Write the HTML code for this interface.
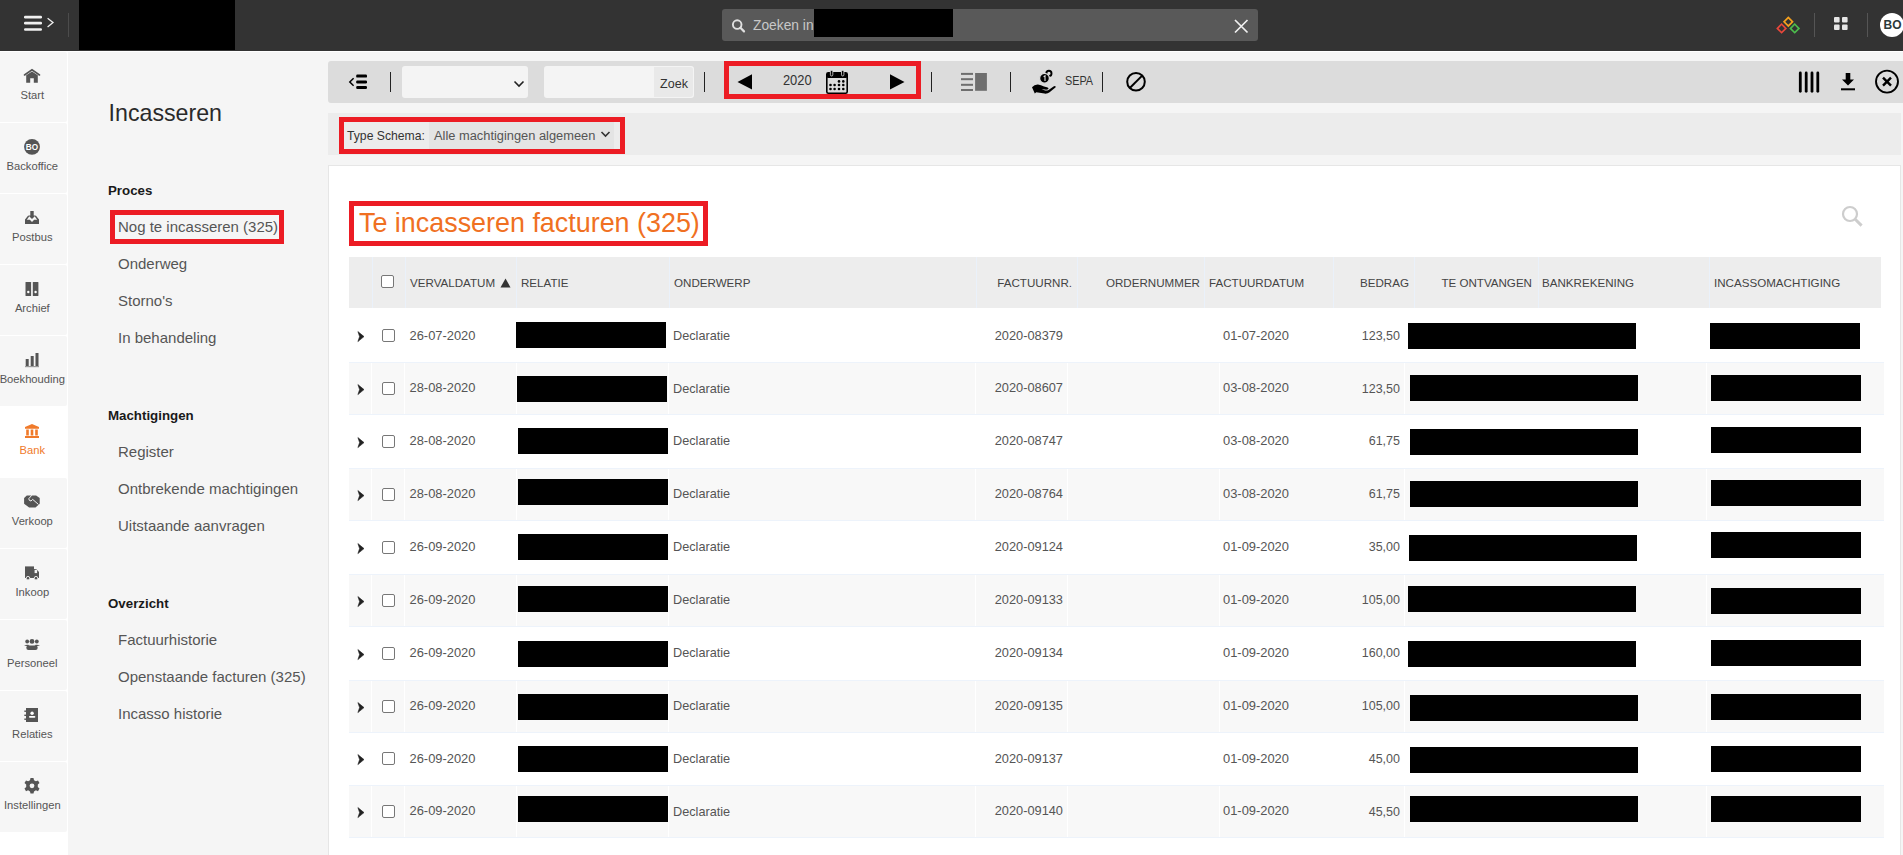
<!DOCTYPE html>
<html><head><meta charset="utf-8"><style>
html,body{margin:0;padding:0;width:1903px;height:855px;overflow:hidden;font-family:"Liberation Sans", sans-serif;}
body{position:relative;background:#f5f5f5}
</style></head><body>
<div style="position:absolute;left:0px;top:0px;width:1903px;height:51px;background:#333333"></div>
<div style="position:absolute;left:0px;top:51px;width:1903px;height:1px;background:#ffffff"></div>
<svg style="position:absolute;left:0px;top:0px;overflow:visible" width="70" height="50" viewBox="0 0 70 50"><g fill="#f0f0f0"><rect x="24" y="15.8" width="18" height="2.6" rx="1.2"/><rect x="24" y="21.8" width="18" height="2.6" rx="1.2"/><rect x="24" y="28.2" width="18" height="2.6" rx="1.2"/></g><path d="M47.6 18.2 L53 22.6 L47.6 27" stroke="#f0f0f0" stroke-width="1.3" fill="none"/></svg>
<div style="position:absolute;left:68px;top:13px;width:1px;height:24px;background:#4c4c4c"></div>
<div style="position:absolute;left:79px;top:0px;width:156px;height:50px;background:#000"></div>
<div style="position:absolute;left:722px;top:9px;width:536px;height:32px;background:#595959;border-radius:3px"></div>
<svg style="position:absolute;left:730px;top:17px;overflow:visible" width="18" height="18" viewBox="0 0 18 18"><circle cx="7.2" cy="7.6" r="4.3" stroke="#e0e0e0" stroke-width="1.9" fill="none"/><path d="M10.4 10.8 L14 14.4" stroke="#e0e0e0" stroke-width="2.2" stroke-linecap="round"/></svg>
<div style="position:absolute;left:753px;top:16.72px;font-size:13.8px;line-height:17px;color:#c8c8c8;font-weight:normal;white-space:nowrap;">Zoeken in</div>
<div style="position:absolute;left:814px;top:9px;width:139px;height:28px;background:#000"></div>
<svg style="position:absolute;left:1233px;top:18px;overflow:visible" width="16" height="16" viewBox="0 0 16 16"><path d="M2 2 L14.5 14.5 M14.5 2 L2 14.5" stroke="#f0f0f0" stroke-width="1.7"/></svg>
<svg style="position:absolute;left:1774px;top:15px;overflow:visible" width="30" height="20" viewBox="0 0 30 20"><g fill="none" stroke-width="1.7"><rect x="-3" y="-3" width="6" height="6" transform="translate(14.3 6.8) rotate(45)" stroke="#f5a01e"/><rect x="-3" y="-3" width="6" height="6" transform="translate(7.6 13.4) rotate(45)" stroke="#e8473b"/><rect x="-3" y="-3" width="6" height="6" transform="translate(20.7 13.4) rotate(45)" stroke="#4cbb4c"/></g></svg>
<div style="position:absolute;left:1814px;top:13px;width:1px;height:24px;background:#555"></div>
<svg style="position:absolute;left:1834px;top:17px;overflow:visible" width="15" height="14" viewBox="0 0 15 14"><g fill="#e6e6e6"><rect x="0" y="0" width="5.6" height="5.4" rx="1"/><rect x="8" y="0" width="5.6" height="5.4" rx="1"/><rect x="0" y="7.6" width="5.6" height="5.4" rx="1"/><rect x="8" y="7.6" width="5.6" height="5.4" rx="1"/></g></svg>
<div style="position:absolute;left:1867px;top:13px;width:1px;height:24px;background:#555"></div>
<div style="position:absolute;left:1880px;top:13px;width:24px;height:24px;background:#fff;border-radius:50%"></div>
<div style="position:absolute;left:1592.5px;width:600px;text-align:center;top:17.84px;font-size:12px;line-height:15px;color:#2b3a3a;font-weight:bold;white-space:nowrap;">BO</div>
<div style="position:absolute;left:0px;top:52px;width:68px;height:803px;background:#ffffff"></div>
<div style="position:absolute;left:0px;top:52px;width:67px;height:70px;background:#f6f6f6;border-radius:0 2px 2px 0"></div>
<div style="position:absolute;left:-267.7px;width:600px;text-align:center;top:87.92px;font-size:11.2px;line-height:14px;color:#555;font-weight:normal;white-space:nowrap;">Start</div>
<div style="position:absolute;left:0px;top:123px;width:67px;height:70px;background:#f6f6f6;border-radius:0 2px 2px 0"></div>
<div style="position:absolute;left:-267.7px;width:600px;text-align:center;top:158.92px;font-size:11.2px;line-height:14px;color:#555;font-weight:normal;white-space:nowrap;">Backoffice</div>
<div style="position:absolute;left:0px;top:194px;width:67px;height:70px;background:#f6f6f6;border-radius:0 2px 2px 0"></div>
<div style="position:absolute;left:-267.7px;width:600px;text-align:center;top:229.92px;font-size:11.2px;line-height:14px;color:#555;font-weight:normal;white-space:nowrap;">Postbus</div>
<div style="position:absolute;left:0px;top:265px;width:67px;height:70px;background:#f6f6f6;border-radius:0 2px 2px 0"></div>
<div style="position:absolute;left:-267.7px;width:600px;text-align:center;top:300.92px;font-size:11.2px;line-height:14px;color:#555;font-weight:normal;white-space:nowrap;">Archief</div>
<div style="position:absolute;left:0px;top:336px;width:67px;height:70px;background:#f6f6f6;border-radius:0 2px 2px 0"></div>
<div style="position:absolute;left:-267.7px;width:600px;text-align:center;top:371.92px;font-size:11.2px;line-height:14px;color:#555;font-weight:normal;white-space:nowrap;">Boekhouding</div>
<div style="position:absolute;left:0px;top:407px;width:67px;height:70px;background:#ffffff;border-radius:0 2px 2px 0"></div>
<div style="position:absolute;left:-267.7px;width:600px;text-align:center;top:442.92px;font-size:11.2px;line-height:14px;color:#f07a2a;font-weight:normal;white-space:nowrap;">Bank</div>
<div style="position:absolute;left:0px;top:478px;width:67px;height:70px;background:#f6f6f6;border-radius:0 2px 2px 0"></div>
<div style="position:absolute;left:-267.7px;width:600px;text-align:center;top:513.92px;font-size:11.2px;line-height:14px;color:#555;font-weight:normal;white-space:nowrap;">Verkoop</div>
<div style="position:absolute;left:0px;top:549px;width:67px;height:70px;background:#f6f6f6;border-radius:0 2px 2px 0"></div>
<div style="position:absolute;left:-267.7px;width:600px;text-align:center;top:584.92px;font-size:11.2px;line-height:14px;color:#555;font-weight:normal;white-space:nowrap;">Inkoop</div>
<div style="position:absolute;left:0px;top:620px;width:67px;height:70px;background:#f6f6f6;border-radius:0 2px 2px 0"></div>
<div style="position:absolute;left:-267.7px;width:600px;text-align:center;top:655.92px;font-size:11.2px;line-height:14px;color:#555;font-weight:normal;white-space:nowrap;">Personeel</div>
<div style="position:absolute;left:0px;top:691px;width:67px;height:70px;background:#f6f6f6;border-radius:0 2px 2px 0"></div>
<div style="position:absolute;left:-267.7px;width:600px;text-align:center;top:726.92px;font-size:11.2px;line-height:14px;color:#555;font-weight:normal;white-space:nowrap;">Relaties</div>
<div style="position:absolute;left:0px;top:762px;width:67px;height:70px;background:#f6f6f6;border-radius:0 2px 2px 0"></div>
<div style="position:absolute;left:-267.7px;width:600px;text-align:center;top:797.92px;font-size:11.2px;line-height:14px;color:#555;font-weight:normal;white-space:nowrap;">Instellingen</div>
<svg style="position:absolute;left:0px;top:0px;overflow:visible" width="68" height="855" viewBox="0 0 68 855"><path d="M24.5 75 L32 69.8 L39.5 75" stroke="#555555" stroke-width="1.6" fill="none" stroke-linecap="round"/><path d="M26.2 75.2 L32 71.6 L37.8 75.2 V82.8 H33.8 V78.2 H30.2 V82.8 H26.2 Z" fill="#555555"/><circle cx="32" cy="146.8" r="7.9" fill="#555555"/><text x="32" y="149.8" font-size="8.2" font-weight="bold" fill="#fff" text-anchor="middle" font-family="Liberation Sans">BO</text><path d="M30.3 211 H33.7 V215.5 H35.6 L32 219 L28.4 215.5 H30.3 Z" fill="#555555"/><path d="M25 219.5 L28.2 215.6 L29.2 216.6 L26.8 219.8 H29.8 L32 222 L34.2 219.8 H37.2 L34.8 216.6 L35.8 215.6 L39 219.5 V224 H25 Z" fill="#555555"/><rect x="25.5" y="282" width="5.6" height="14" rx="0.5" fill="#555555"/><rect x="32.8" y="282" width="5.6" height="14" rx="0.5" fill="#555555"/><circle cx="28.3" cy="292" r="1.2" fill="#fff"/><circle cx="35.6" cy="292" r="1.2" fill="#fff"/><rect x="25.7" y="359" width="3" height="7" fill="#555555"/><rect x="30.7" y="356" width="3" height="10" fill="#555555"/><rect x="35.5" y="353" width="3" height="13" fill="#555555"/><rect x="25" y="366" width="14" height="1.2" fill="#999"/><path d="M25 427 L32 424 L39 427 V428.8 H25 Z" fill="#f07a2a"/><rect x="26.2" y="429.5" width="2.6" height="6" fill="#f07a2a"/><rect x="30.7" y="429.5" width="2.6" height="6" fill="#f07a2a"/><rect x="35.2" y="429.5" width="2.6" height="6" fill="#f07a2a"/><rect x="25" y="436" width="14" height="2" fill="#f07a2a"/><path d="M24.1 498 L26.8 495.5 H36.1 L39.7 498 V503.8 L35.5 507.6 H29.1 L24.1 503.8 Z" fill="#555555"/><path d="M31.8 495.2 L28.8 498.7 Q28.8 500.9 31 501 L32.7 499.4 L38.4 504.4" stroke="#f4f4f4" stroke-width="1" fill="none"/><rect x="25" y="566.4" width="9" height="11.6" fill="#555555"/><path d="M34 569 H36.2 L39 572 V578 H34 Z" fill="#555555"/><rect x="34.6" y="569.8" width="2.5" height="3.3" fill="#f4f4f4"/><circle cx="28" cy="578.2" r="1.8" fill="#555555" stroke="#f4f4f4" stroke-width="0.9"/><circle cx="36" cy="578.2" r="1.8" fill="#555555" stroke="#f4f4f4" stroke-width="0.9"/><circle cx="27.2" cy="641.5" r="1.9" fill="#555555"/><circle cx="32" cy="641.4" r="2.4" fill="#555555"/><circle cx="36.8" cy="641.5" r="1.9" fill="#555555"/><path d="M24 645.5 Q26.5 644.2 29.5 645 L28 646.2 Z" fill="#555555"/><path d="M40 645.5 Q37.5 644.2 34.5 645 L36 646.2 Z" fill="#555555"/><rect x="26.3" y="645.5" width="11.4" height="4.5" rx="2.2" fill="#555555"/><rect x="26" y="708" width="12" height="14" fill="#555555"/><g fill="#555555"><rect x="24.3" y="710.5" width="2" height="1.4"/><rect x="24.3" y="714.6" width="2" height="1.4"/><rect x="24.3" y="718.5" width="2" height="1.4"/></g><circle cx="32.1" cy="713.3" r="1.7" fill="#fff"/><rect x="29" y="716" width="6.3" height="1.8" rx="0.8" fill="#fff"/><g transform="translate(32 785.8)"><path d="M-1.5 -7.8 H1.5 L2 -5.6 L3.9 -4.5 L6 -5.4 L7.5 -2.8 L5.8 -1.3 V1.3 L7.5 2.8 L6 5.4 L3.9 4.5 L2 5.6 L1.5 7.8 H-1.5 L-2 5.6 L-3.9 4.5 L-6 5.4 L-7.5 2.8 L-5.8 1.3 V-1.3 L-7.5 -2.8 L-6 -5.4 L-3.9 -4.5 L-2 -5.6 Z" fill="#555555"/><circle r="2.4" fill="#f4f4f4"/></g></svg>
<div style="position:absolute;left:108.6px;top:99.06px;font-size:23.2px;line-height:29px;color:#2a2a2a;font-weight:normal;white-space:nowrap;">Incasseren</div>
<div style="position:absolute;left:108px;top:181.89px;font-size:13.3px;line-height:17px;color:#1a1a1a;font-weight:bold;white-space:nowrap;">Proces</div>
<div style="position:absolute;left:118px;top:217.30px;font-size:15px;line-height:19px;color:#555;font-weight:normal;white-space:nowrap;">Nog te incasseren (325)</div>
<div style="position:absolute;left:118px;top:254.30px;font-size:15px;line-height:19px;color:#555;font-weight:normal;white-space:nowrap;">Onderweg</div>
<div style="position:absolute;left:118px;top:291.30px;font-size:15px;line-height:19px;color:#555;font-weight:normal;white-space:nowrap;">Storno's</div>
<div style="position:absolute;left:118px;top:328.30px;font-size:15px;line-height:19px;color:#555;font-weight:normal;white-space:nowrap;">In behandeling</div>
<div style="position:absolute;left:108px;top:406.89px;font-size:13.3px;line-height:17px;color:#1a1a1a;font-weight:bold;white-space:nowrap;">Machtigingen</div>
<div style="position:absolute;left:118px;top:442.30px;font-size:15px;line-height:19px;color:#555;font-weight:normal;white-space:nowrap;">Register</div>
<div style="position:absolute;left:118px;top:479.30px;font-size:15px;line-height:19px;color:#555;font-weight:normal;white-space:nowrap;">Ontbrekende machtigingen</div>
<div style="position:absolute;left:118px;top:516.30px;font-size:15px;line-height:19px;color:#555;font-weight:normal;white-space:nowrap;">Uitstaande aanvragen</div>
<div style="position:absolute;left:108px;top:594.89px;font-size:13.3px;line-height:17px;color:#1a1a1a;font-weight:bold;white-space:nowrap;">Overzicht</div>
<div style="position:absolute;left:118px;top:630.30px;font-size:15px;line-height:19px;color:#555;font-weight:normal;white-space:nowrap;">Factuurhistorie</div>
<div style="position:absolute;left:118px;top:667.30px;font-size:15px;line-height:19px;color:#555;font-weight:normal;white-space:nowrap;">Openstaande facturen (325)</div>
<div style="position:absolute;left:118px;top:704.30px;font-size:15px;line-height:19px;color:#555;font-weight:normal;white-space:nowrap;">Incasso historie</div>
<div style="position:absolute;left:110px;top:210px;width:174px;height:34px;border:5px solid #ec1c24;box-sizing:border-box"></div>
<div style="position:absolute;left:328px;top:61px;width:1575px;height:42px;background:#dcdcdc;border-radius:3px 0 0 3px"></div>
<svg style="position:absolute;left:340px;top:66px;overflow:visible" width="40" height="32" viewBox="0 0 40 32"><path d="M13.6 12.2 L9.8 16 L13.6 19.8" stroke="#000" stroke-width="1.5" fill="none"/><g fill="#000"><rect x="16.2" y="8.6" width="10.8" height="3" rx="1.2"/><rect x="16.2" y="14.4" width="10.8" height="3" rx="1.2"/><rect x="16.2" y="20" width="10.8" height="3" rx="1.2"/></g></svg>
<div style="position:absolute;left:402px;top:66px;width:126px;height:32px;background:#f4f4f4;border-radius:3px"></div>
<svg style="position:absolute;left:513px;top:78.5px;overflow:visible" width="12" height="10" viewBox="0 0 12 10"><path d="M1.5 2.5 L6 7 L10.5 2.5" stroke="#222" stroke-width="1.6" fill="none"/></svg>
<div style="position:absolute;left:544px;top:66px;width:150px;height:32px;background:#f4f4f4;border-radius:3px"></div>
<div style="position:absolute;left:654px;top:67px;width:39px;height:30px;background:#e9e9e9;border-radius:0 3px 3px 0"></div>
<div style="position:absolute;left:374px;width:600px;text-align:center;top:75.67px;font-size:12.5px;line-height:16px;color:#333;font-weight:normal;white-space:nowrap;">Zoek</div>
<div style="position:absolute;left:390px;top:72px;width:1px;height:20px;background:#222"></div>
<div style="position:absolute;left:704px;top:72px;width:1px;height:20px;background:#222"></div>
<div style="position:absolute;left:931px;top:72px;width:1px;height:20px;background:#222"></div>
<div style="position:absolute;left:1010px;top:72px;width:1px;height:20px;background:#222"></div>
<div style="position:absolute;left:1102px;top:72px;width:1px;height:20px;background:#222"></div>
<div style="position:absolute;left:724px;top:61px;width:197px;height:38px;border:5px solid #ec1c24;box-sizing:border-box"></div>
<svg style="position:absolute;left:735px;top:72px;overflow:visible" width="20" height="20" viewBox="0 0 20 20"><path d="M2.5 9.9 L17 2.3 V17.6 Z" fill="#000"/></svg>
<div style="position:absolute;left:497.29999999999995px;width:600px;text-align:center;top:72.53px;font-size:12.9px;line-height:16px;color:#333;font-weight:normal;white-space:nowrap;transform:scaleY(1.08)">2020</div>
<svg style="position:absolute;left:824px;top:69px;overflow:visible" width="26" height="26" viewBox="0 0 26 26"><rect x="2.8" y="3.7" width="20.4" height="20.6" rx="1.5" fill="none" stroke="#000" stroke-width="1.6"/><rect x="2.8" y="3.7" width="20.4" height="5.4" rx="1.5" fill="#000"/><rect x="6.4" y="1.4" width="2.4" height="5.6" rx="1.2" fill="#000" stroke="#dcdcdc" stroke-width="0.8"/><rect x="17.5" y="1.4" width="2.4" height="5.6" rx="1.2" fill="#000" stroke="#dcdcdc" stroke-width="0.8"/><g fill="#000"><circle cx="15" cy="12.4" r="1.3"/><circle cx="19.3" cy="12.4" r="1.3"/><circle cx="6.5" cy="16" r="1.3"/><circle cx="10.6" cy="16" r="1.3"/><circle cx="15" cy="16" r="1.3"/><circle cx="19.3" cy="16" r="1.3"/><circle cx="6.5" cy="20" r="1.3"/><circle cx="10.6" cy="20" r="1.3"/><circle cx="15" cy="20" r="1.3"/><circle cx="19.3" cy="20" r="1.3"/></g></svg>
<svg style="position:absolute;left:887px;top:72px;overflow:visible" width="20" height="20" viewBox="0 0 20 20"><path d="M17.5 9.9 L3 2.3 V17.6 Z" fill="#000"/></svg>
<svg style="position:absolute;left:958px;top:70px;overflow:visible" width="32" height="24" viewBox="0 0 32 24"><g fill="#6e6e6e"><rect x="3" y="2.9" width="12" height="2" /><rect x="3" y="8.2" width="12" height="2"/><rect x="3" y="13.8" width="12" height="2"/><rect x="3" y="19" width="12" height="2"/><rect x="17.1" y="3" width="11.8" height="17.8"/></g></svg>
<svg style="position:absolute;left:1030px;top:68px;overflow:visible" width="28" height="28" viewBox="0 0 28 28"><circle cx="18.9" cy="5.4" r="2.6" fill="none" stroke="#000" stroke-width="1.9"/><circle cx="14.5" cy="10.3" r="4.9" fill="#000" stroke="#dcdcdc" stroke-width="1.3"/><path d="M13.6 8.8 L15 7.8 V12.9" stroke="#dcdcdc" stroke-width="1.1" fill="none"/><path d="M2 19.2 Q4.5 16.4 8 16.6 Q11 17 14 18.4 L17 19.2 Q19 19.8 18.4 21 Q17.6 21.8 15 21.6 L11.5 21.3 L15.2 22.5 Q17.2 22.7 18.6 21.9 L23.5 18.4 Q25.8 17.4 25.7 19.3 L19.6 24.3 Q17.5 25.9 14.5 25.6 L6.3 24.2 L4.8 25.4 Z" fill="#000"/></svg>
<div style="position:absolute;left:778.5px;width:600px;text-align:center;top:73.54px;font-size:12.3px;line-height:15px;color:#333;font-weight:normal;white-space:nowrap;transform:scaleX(0.88)">SEPA</div>
<svg style="position:absolute;left:1124px;top:70px;overflow:visible" width="24" height="24" viewBox="0 0 24 24"><circle cx="12" cy="11.8" r="8.8" fill="none" stroke="#000" stroke-width="2"/><path d="M5.8 18 L18.2 5.6" stroke="#000" stroke-width="2"/></svg>
<svg style="position:absolute;left:1796px;top:69px;overflow:visible" width="26" height="26" viewBox="0 0 26 26"><g stroke="#000" stroke-width="2.8" stroke-linecap="round"><path d="M4.3 4 V22.3"/><path d="M10.2 4 V22.3"/><path d="M16 4 V22.3"/><path d="M21.8 4 V22.3"/></g></svg>
<svg style="position:absolute;left:1838px;top:70px;overflow:visible" width="20" height="22" viewBox="0 0 20 22"><path d="M7.7 3 H12.3 V9.5 H16 L10 15.5 L4 9.5 H7.7 Z" fill="#000"/><rect x="3" y="18.3" width="14" height="2" fill="#000"/></svg>
<svg style="position:absolute;left:1873px;top:68px;overflow:visible" width="28" height="28" viewBox="0 0 28 28"><circle cx="14" cy="13.6" r="11" fill="none" stroke="#000" stroke-width="1.9"/><path d="M10 9.6 L18 17.6 M18 9.6 L10 17.6" stroke="#000" stroke-width="2.4"/></svg>
<div style="position:absolute;left:328px;top:113px;width:1573px;height:42px;background:#ececec"></div>
<div style="position:absolute;left:429px;top:120px;width:185px;height:30px;background:#e4e4e4"></div>
<div style="position:absolute;left:339px;top:117px;width:286px;height:37px;border:5px solid #ec1c24;box-sizing:border-box"></div>
<div style="position:absolute;left:347px;top:129.27px;font-size:12.2px;line-height:15px;color:#333;font-weight:normal;white-space:nowrap;">Type Schema:</div>
<div style="position:absolute;left:434px;top:127.55px;font-size:12.85px;line-height:16px;color:#555;font-weight:normal;white-space:nowrap;">Alle machtigingen algemeen</div>
<svg style="position:absolute;left:599.5px;top:130px;overflow:visible" width="12" height="10" viewBox="0 0 12 10"><path d="M1.5 2 L5.5 6 L9.5 2" stroke="#333" stroke-width="1.6" fill="none"/></svg>
<div style="position:absolute;left:328px;top:165px;width:1573px;height:700px;background:#fff;border:1px solid #e6e6e6;box-sizing:border-box"></div>
<div style="position:absolute;left:349px;top:201px;width:359px;height:45px;border:5px solid #ec1c24;box-sizing:border-box"></div>
<div style="position:absolute;left:359px;top:205.68px;font-size:26.9px;line-height:34px;color:#f07022;font-weight:normal;white-space:nowrap;">Te incasseren facturen (325)</div>
<svg style="position:absolute;left:1838px;top:202px;overflow:visible" width="30" height="30" viewBox="0 0 30 30"><circle cx="12" cy="12" r="7" fill="none" stroke="#cdcdcd" stroke-width="2.2"/><path d="M17.2 17.2 L23.6 23.6" stroke="#cdcdcd" stroke-width="3"/></svg>
<div style="position:absolute;left:349px;top:257px;width:1532px;height:51px;background:#ededed"></div>
<div style="position:absolute;left:372px;top:257px;width:1px;height:51px;background:#eaf1fa"></div>
<div style="position:absolute;left:405px;top:257px;width:1px;height:51px;background:#eaf1fa"></div>
<div style="position:absolute;left:516px;top:257px;width:1px;height:51px;background:#eaf1fa"></div>
<div style="position:absolute;left:669px;top:257px;width:1px;height:51px;background:#eaf1fa"></div>
<div style="position:absolute;left:975.6px;top:257px;width:1px;height:51px;background:#eaf1fa"></div>
<div style="position:absolute;left:1076.6px;top:257px;width:1px;height:51px;background:#eaf1fa"></div>
<div style="position:absolute;left:1204px;top:257px;width:1px;height:51px;background:#eaf1fa"></div>
<div style="position:absolute;left:1333.4px;top:257px;width:1px;height:51px;background:#eaf1fa"></div>
<div style="position:absolute;left:1413.6px;top:257px;width:1px;height:51px;background:#eaf1fa"></div>
<div style="position:absolute;left:1537.5px;top:257px;width:1px;height:51px;background:#eaf1fa"></div>
<div style="position:absolute;left:1709.3px;top:257px;width:1px;height:51px;background:#eaf1fa"></div>
<div style="position:absolute;left:410px;top:276.48px;font-size:11.6px;line-height:14px;color:#444;font-weight:normal;white-space:nowrap;">VERVALDATUM</div>
<div style="position:absolute;left:521px;top:276.48px;font-size:11.6px;line-height:14px;color:#444;font-weight:normal;white-space:nowrap;">RELATIE</div>
<div style="position:absolute;left:674px;top:276.48px;font-size:11.6px;line-height:14px;color:#444;font-weight:normal;white-space:nowrap;">ONDERWERP</div>
<div style="position:absolute;left:672px;width:400px;text-align:right;top:276.48px;font-size:11.6px;line-height:14px;color:#444;font-weight:normal;white-space:nowrap;">FACTUURNR.</div>
<div style="position:absolute;left:800px;width:400px;text-align:right;top:276.48px;font-size:11.6px;line-height:14px;color:#444;font-weight:normal;white-space:nowrap;">ORDERNUMMER</div>
<div style="position:absolute;left:1209px;top:276.48px;font-size:11.6px;line-height:14px;color:#444;font-weight:normal;white-space:nowrap;">FACTUURDATUM</div>
<div style="position:absolute;left:1009px;width:400px;text-align:right;top:276.48px;font-size:11.6px;line-height:14px;color:#444;font-weight:normal;white-space:nowrap;">BEDRAG</div>
<div style="position:absolute;left:1132px;width:400px;text-align:right;top:276.48px;font-size:11.6px;line-height:14px;color:#444;font-weight:normal;white-space:nowrap;">TE ONTVANGEN</div>
<div style="position:absolute;left:1542px;top:276.48px;font-size:11.6px;line-height:14px;color:#444;font-weight:normal;white-space:nowrap;">BANKREKENING</div>
<div style="position:absolute;left:1714px;top:276.48px;font-size:11.6px;line-height:14px;color:#444;font-weight:normal;white-space:nowrap;">INCASSOMACHTIGING</div>
<svg style="position:absolute;left:499px;top:277px;overflow:visible" width="14" height="12" viewBox="0 0 14 12"><path d="M1.5 10.5 L6.5 1.5 L11.5 10.5 Z" fill="#333"/></svg>
<div style="position:absolute;left:381px;top:275px;width:13px;height:13px;border:1px solid #777;border-radius:2px;box-sizing:border-box;background:#fff"></div>
<svg style="position:absolute;left:355px;top:330px;overflow:visible" width="12" height="14" viewBox="0 0 12 14"><path d="M2.9 1.6 L9 6.6 L2.9 11.6 L4.6 6.6 Z" fill="#222" stroke="#222" stroke-width="0.6" stroke-linejoin="round"/></svg>
<div style="position:absolute;left:382px;top:329px;width:13px;height:13px;border:1px solid #777;border-radius:2px;box-sizing:border-box;background:#fff"></div>
<div style="position:absolute;left:409.5px;top:327.56px;font-size:12.9px;line-height:16px;color:#555;font-weight:normal;white-space:nowrap;">26-07-2020</div>
<div style="position:absolute;left:516px;top:322px;width:150px;height:26px;background:#000"></div>
<div style="position:absolute;left:673px;top:327.62px;font-size:12.7px;line-height:16px;color:#555;font-weight:normal;white-space:nowrap;">Declaratie</div>
<div style="position:absolute;left:663px;width:400px;text-align:right;top:327.59px;font-size:12.8px;line-height:16px;color:#555;font-weight:normal;white-space:nowrap;">2020-08379</div>
<div style="position:absolute;left:1223px;top:327.56px;font-size:12.9px;line-height:16px;color:#555;font-weight:normal;white-space:nowrap;">01-07-2020</div>
<div style="position:absolute;left:1000px;width:400px;text-align:right;top:327.69px;font-size:12.5px;line-height:16px;color:#555;font-weight:normal;white-space:nowrap;">123,50</div>
<div style="position:absolute;left:1408px;top:323px;width:228px;height:26px;background:#000"></div>
<div style="position:absolute;left:1710px;top:323px;width:150px;height:26px;background:#000"></div>
<div style="position:absolute;left:349px;top:362px;width:1535px;height:53px;background:#f8f8f8;border-top:1px solid #edf3fb;border-bottom:1px solid #edf3fb;box-sizing:border-box"></div>
<div style="position:absolute;left:371.3px;top:363px;width:1px;height:51px;background:#ffffff"></div>
<div style="position:absolute;left:404.4px;top:363px;width:1px;height:51px;background:#ffffff"></div>
<div style="position:absolute;left:515.5px;top:363px;width:1px;height:51px;background:#ffffff"></div>
<div style="position:absolute;left:668.4px;top:363px;width:1px;height:51px;background:#ffffff"></div>
<div style="position:absolute;left:974.5px;top:363px;width:1px;height:51px;background:#ffffff"></div>
<div style="position:absolute;left:1067.3px;top:363px;width:1px;height:51px;background:#ffffff"></div>
<div style="position:absolute;left:1218.6px;top:363px;width:1px;height:51px;background:#ffffff"></div>
<div style="position:absolute;left:1404.3px;top:363px;width:1px;height:51px;background:#ffffff"></div>
<div style="position:absolute;left:1706.3px;top:363px;width:1px;height:51px;background:#ffffff"></div>
<svg style="position:absolute;left:355px;top:383px;overflow:visible" width="12" height="14" viewBox="0 0 12 14"><path d="M2.9 1.6 L9 6.6 L2.9 11.6 L4.6 6.6 Z" fill="#222" stroke="#222" stroke-width="0.6" stroke-linejoin="round"/></svg>
<div style="position:absolute;left:382px;top:382px;width:13px;height:13px;border:1px solid #777;border-radius:2px;box-sizing:border-box;background:#fff"></div>
<div style="position:absolute;left:409.5px;top:380.43px;font-size:12.9px;line-height:16px;color:#555;font-weight:normal;white-space:nowrap;">28-08-2020</div>
<div style="position:absolute;left:517px;top:376px;width:150px;height:26px;background:#000"></div>
<div style="position:absolute;left:673px;top:380.50px;font-size:12.7px;line-height:16px;color:#555;font-weight:normal;white-space:nowrap;">Declaratie</div>
<div style="position:absolute;left:663px;width:400px;text-align:right;top:380.46px;font-size:12.8px;line-height:16px;color:#555;font-weight:normal;white-space:nowrap;">2020-08607</div>
<div style="position:absolute;left:1223px;top:380.43px;font-size:12.9px;line-height:16px;color:#555;font-weight:normal;white-space:nowrap;">03-08-2020</div>
<div style="position:absolute;left:1000px;width:400px;text-align:right;top:380.57px;font-size:12.5px;line-height:16px;color:#555;font-weight:normal;white-space:nowrap;">123,50</div>
<div style="position:absolute;left:1410px;top:375px;width:228px;height:26px;background:#000"></div>
<div style="position:absolute;left:1711px;top:375px;width:150px;height:26px;background:#000"></div>
<svg style="position:absolute;left:355px;top:436px;overflow:visible" width="12" height="14" viewBox="0 0 12 14"><path d="M2.9 1.6 L9 6.6 L2.9 11.6 L4.6 6.6 Z" fill="#222" stroke="#222" stroke-width="0.6" stroke-linejoin="round"/></svg>
<div style="position:absolute;left:382px;top:435px;width:13px;height:13px;border:1px solid #777;border-radius:2px;box-sizing:border-box;background:#fff"></div>
<div style="position:absolute;left:409.5px;top:433.31px;font-size:12.9px;line-height:16px;color:#555;font-weight:normal;white-space:nowrap;">28-08-2020</div>
<div style="position:absolute;left:518px;top:428px;width:150px;height:26px;background:#000"></div>
<div style="position:absolute;left:673px;top:433.37px;font-size:12.7px;line-height:16px;color:#555;font-weight:normal;white-space:nowrap;">Declaratie</div>
<div style="position:absolute;left:663px;width:400px;text-align:right;top:433.34px;font-size:12.8px;line-height:16px;color:#555;font-weight:normal;white-space:nowrap;">2020-08747</div>
<div style="position:absolute;left:1223px;top:433.31px;font-size:12.9px;line-height:16px;color:#555;font-weight:normal;white-space:nowrap;">03-08-2020</div>
<div style="position:absolute;left:1000px;width:400px;text-align:right;top:433.44px;font-size:12.5px;line-height:16px;color:#555;font-weight:normal;white-space:nowrap;">61,75</div>
<div style="position:absolute;left:1410px;top:429px;width:228px;height:26px;background:#000"></div>
<div style="position:absolute;left:1711px;top:427px;width:150px;height:26px;background:#000"></div>
<div style="position:absolute;left:349px;top:468px;width:1535px;height:53px;background:#f8f8f8;border-top:1px solid #edf3fb;border-bottom:1px solid #edf3fb;box-sizing:border-box"></div>
<div style="position:absolute;left:371.3px;top:469px;width:1px;height:51px;background:#ffffff"></div>
<div style="position:absolute;left:404.4px;top:469px;width:1px;height:51px;background:#ffffff"></div>
<div style="position:absolute;left:515.5px;top:469px;width:1px;height:51px;background:#ffffff"></div>
<div style="position:absolute;left:668.4px;top:469px;width:1px;height:51px;background:#ffffff"></div>
<div style="position:absolute;left:974.5px;top:469px;width:1px;height:51px;background:#ffffff"></div>
<div style="position:absolute;left:1067.3px;top:469px;width:1px;height:51px;background:#ffffff"></div>
<div style="position:absolute;left:1218.6px;top:469px;width:1px;height:51px;background:#ffffff"></div>
<div style="position:absolute;left:1404.3px;top:469px;width:1px;height:51px;background:#ffffff"></div>
<div style="position:absolute;left:1706.3px;top:469px;width:1px;height:51px;background:#ffffff"></div>
<svg style="position:absolute;left:355px;top:489px;overflow:visible" width="12" height="14" viewBox="0 0 12 14"><path d="M2.9 1.6 L9 6.6 L2.9 11.6 L4.6 6.6 Z" fill="#222" stroke="#222" stroke-width="0.6" stroke-linejoin="round"/></svg>
<div style="position:absolute;left:382px;top:488px;width:13px;height:13px;border:1px solid #777;border-radius:2px;box-sizing:border-box;background:#fff"></div>
<div style="position:absolute;left:409.5px;top:486.18px;font-size:12.9px;line-height:16px;color:#555;font-weight:normal;white-space:nowrap;">28-08-2020</div>
<div style="position:absolute;left:518px;top:479px;width:150px;height:26px;background:#000"></div>
<div style="position:absolute;left:673px;top:486.25px;font-size:12.7px;line-height:16px;color:#555;font-weight:normal;white-space:nowrap;">Declaratie</div>
<div style="position:absolute;left:663px;width:400px;text-align:right;top:486.21px;font-size:12.8px;line-height:16px;color:#555;font-weight:normal;white-space:nowrap;">2020-08764</div>
<div style="position:absolute;left:1223px;top:486.18px;font-size:12.9px;line-height:16px;color:#555;font-weight:normal;white-space:nowrap;">03-08-2020</div>
<div style="position:absolute;left:1000px;width:400px;text-align:right;top:486.32px;font-size:12.5px;line-height:16px;color:#555;font-weight:normal;white-space:nowrap;">61,75</div>
<div style="position:absolute;left:1410px;top:481px;width:228px;height:26px;background:#000"></div>
<div style="position:absolute;left:1711px;top:480px;width:150px;height:26px;background:#000"></div>
<svg style="position:absolute;left:355px;top:542px;overflow:visible" width="12" height="14" viewBox="0 0 12 14"><path d="M2.9 1.6 L9 6.6 L2.9 11.6 L4.6 6.6 Z" fill="#222" stroke="#222" stroke-width="0.6" stroke-linejoin="round"/></svg>
<div style="position:absolute;left:382px;top:541px;width:13px;height:13px;border:1px solid #777;border-radius:2px;box-sizing:border-box;background:#fff"></div>
<div style="position:absolute;left:409.5px;top:539.06px;font-size:12.9px;line-height:16px;color:#555;font-weight:normal;white-space:nowrap;">26-09-2020</div>
<div style="position:absolute;left:518px;top:534px;width:150px;height:26px;background:#000"></div>
<div style="position:absolute;left:673px;top:539.12px;font-size:12.7px;line-height:16px;color:#555;font-weight:normal;white-space:nowrap;">Declaratie</div>
<div style="position:absolute;left:663px;width:400px;text-align:right;top:539.09px;font-size:12.8px;line-height:16px;color:#555;font-weight:normal;white-space:nowrap;">2020-09124</div>
<div style="position:absolute;left:1223px;top:539.06px;font-size:12.9px;line-height:16px;color:#555;font-weight:normal;white-space:nowrap;">01-09-2020</div>
<div style="position:absolute;left:1000px;width:400px;text-align:right;top:539.19px;font-size:12.5px;line-height:16px;color:#555;font-weight:normal;white-space:nowrap;">35,00</div>
<div style="position:absolute;left:1409px;top:535px;width:228px;height:26px;background:#000"></div>
<div style="position:absolute;left:1711px;top:532px;width:150px;height:26px;background:#000"></div>
<div style="position:absolute;left:349px;top:574px;width:1535px;height:53px;background:#f8f8f8;border-top:1px solid #edf3fb;border-bottom:1px solid #edf3fb;box-sizing:border-box"></div>
<div style="position:absolute;left:371.3px;top:575px;width:1px;height:51px;background:#ffffff"></div>
<div style="position:absolute;left:404.4px;top:575px;width:1px;height:51px;background:#ffffff"></div>
<div style="position:absolute;left:515.5px;top:575px;width:1px;height:51px;background:#ffffff"></div>
<div style="position:absolute;left:668.4px;top:575px;width:1px;height:51px;background:#ffffff"></div>
<div style="position:absolute;left:974.5px;top:575px;width:1px;height:51px;background:#ffffff"></div>
<div style="position:absolute;left:1067.3px;top:575px;width:1px;height:51px;background:#ffffff"></div>
<div style="position:absolute;left:1218.6px;top:575px;width:1px;height:51px;background:#ffffff"></div>
<div style="position:absolute;left:1404.3px;top:575px;width:1px;height:51px;background:#ffffff"></div>
<div style="position:absolute;left:1706.3px;top:575px;width:1px;height:51px;background:#ffffff"></div>
<svg style="position:absolute;left:355px;top:595px;overflow:visible" width="12" height="14" viewBox="0 0 12 14"><path d="M2.9 1.6 L9 6.6 L2.9 11.6 L4.6 6.6 Z" fill="#222" stroke="#222" stroke-width="0.6" stroke-linejoin="round"/></svg>
<div style="position:absolute;left:382px;top:594px;width:13px;height:13px;border:1px solid #777;border-radius:2px;box-sizing:border-box;background:#fff"></div>
<div style="position:absolute;left:409.5px;top:591.93px;font-size:12.9px;line-height:16px;color:#555;font-weight:normal;white-space:nowrap;">26-09-2020</div>
<div style="position:absolute;left:518px;top:586px;width:150px;height:26px;background:#000"></div>
<div style="position:absolute;left:673px;top:592.00px;font-size:12.7px;line-height:16px;color:#555;font-weight:normal;white-space:nowrap;">Declaratie</div>
<div style="position:absolute;left:663px;width:400px;text-align:right;top:591.96px;font-size:12.8px;line-height:16px;color:#555;font-weight:normal;white-space:nowrap;">2020-09133</div>
<div style="position:absolute;left:1223px;top:591.93px;font-size:12.9px;line-height:16px;color:#555;font-weight:normal;white-space:nowrap;">01-09-2020</div>
<div style="position:absolute;left:1000px;width:400px;text-align:right;top:592.07px;font-size:12.5px;line-height:16px;color:#555;font-weight:normal;white-space:nowrap;">105,00</div>
<div style="position:absolute;left:1408px;top:586px;width:228px;height:26px;background:#000"></div>
<div style="position:absolute;left:1711px;top:588px;width:150px;height:26px;background:#000"></div>
<svg style="position:absolute;left:355px;top:648px;overflow:visible" width="12" height="14" viewBox="0 0 12 14"><path d="M2.9 1.6 L9 6.6 L2.9 11.6 L4.6 6.6 Z" fill="#222" stroke="#222" stroke-width="0.6" stroke-linejoin="round"/></svg>
<div style="position:absolute;left:382px;top:647px;width:13px;height:13px;border:1px solid #777;border-radius:2px;box-sizing:border-box;background:#fff"></div>
<div style="position:absolute;left:409.5px;top:644.81px;font-size:12.9px;line-height:16px;color:#555;font-weight:normal;white-space:nowrap;">26-09-2020</div>
<div style="position:absolute;left:518px;top:641px;width:150px;height:26px;background:#000"></div>
<div style="position:absolute;left:673px;top:644.87px;font-size:12.7px;line-height:16px;color:#555;font-weight:normal;white-space:nowrap;">Declaratie</div>
<div style="position:absolute;left:663px;width:400px;text-align:right;top:644.84px;font-size:12.8px;line-height:16px;color:#555;font-weight:normal;white-space:nowrap;">2020-09134</div>
<div style="position:absolute;left:1223px;top:644.81px;font-size:12.9px;line-height:16px;color:#555;font-weight:normal;white-space:nowrap;">01-09-2020</div>
<div style="position:absolute;left:1000px;width:400px;text-align:right;top:644.94px;font-size:12.5px;line-height:16px;color:#555;font-weight:normal;white-space:nowrap;">160,00</div>
<div style="position:absolute;left:1408px;top:641px;width:228px;height:26px;background:#000"></div>
<div style="position:absolute;left:1711px;top:640px;width:150px;height:26px;background:#000"></div>
<div style="position:absolute;left:349px;top:680px;width:1535px;height:53px;background:#f8f8f8;border-top:1px solid #edf3fb;border-bottom:1px solid #edf3fb;box-sizing:border-box"></div>
<div style="position:absolute;left:371.3px;top:681px;width:1px;height:51px;background:#ffffff"></div>
<div style="position:absolute;left:404.4px;top:681px;width:1px;height:51px;background:#ffffff"></div>
<div style="position:absolute;left:515.5px;top:681px;width:1px;height:51px;background:#ffffff"></div>
<div style="position:absolute;left:668.4px;top:681px;width:1px;height:51px;background:#ffffff"></div>
<div style="position:absolute;left:974.5px;top:681px;width:1px;height:51px;background:#ffffff"></div>
<div style="position:absolute;left:1067.3px;top:681px;width:1px;height:51px;background:#ffffff"></div>
<div style="position:absolute;left:1218.6px;top:681px;width:1px;height:51px;background:#ffffff"></div>
<div style="position:absolute;left:1404.3px;top:681px;width:1px;height:51px;background:#ffffff"></div>
<div style="position:absolute;left:1706.3px;top:681px;width:1px;height:51px;background:#ffffff"></div>
<svg style="position:absolute;left:355px;top:701px;overflow:visible" width="12" height="14" viewBox="0 0 12 14"><path d="M2.9 1.6 L9 6.6 L2.9 11.6 L4.6 6.6 Z" fill="#222" stroke="#222" stroke-width="0.6" stroke-linejoin="round"/></svg>
<div style="position:absolute;left:382px;top:700px;width:13px;height:13px;border:1px solid #777;border-radius:2px;box-sizing:border-box;background:#fff"></div>
<div style="position:absolute;left:409.5px;top:697.68px;font-size:12.9px;line-height:16px;color:#555;font-weight:normal;white-space:nowrap;">26-09-2020</div>
<div style="position:absolute;left:518px;top:694px;width:150px;height:26px;background:#000"></div>
<div style="position:absolute;left:673px;top:697.75px;font-size:12.7px;line-height:16px;color:#555;font-weight:normal;white-space:nowrap;">Declaratie</div>
<div style="position:absolute;left:663px;width:400px;text-align:right;top:697.71px;font-size:12.8px;line-height:16px;color:#555;font-weight:normal;white-space:nowrap;">2020-09135</div>
<div style="position:absolute;left:1223px;top:697.68px;font-size:12.9px;line-height:16px;color:#555;font-weight:normal;white-space:nowrap;">01-09-2020</div>
<div style="position:absolute;left:1000px;width:400px;text-align:right;top:697.82px;font-size:12.5px;line-height:16px;color:#555;font-weight:normal;white-space:nowrap;">105,00</div>
<div style="position:absolute;left:1410px;top:695px;width:228px;height:26px;background:#000"></div>
<div style="position:absolute;left:1711px;top:694px;width:150px;height:26px;background:#000"></div>
<svg style="position:absolute;left:355px;top:753px;overflow:visible" width="12" height="14" viewBox="0 0 12 14"><path d="M2.9 1.6 L9 6.6 L2.9 11.6 L4.6 6.6 Z" fill="#222" stroke="#222" stroke-width="0.6" stroke-linejoin="round"/></svg>
<div style="position:absolute;left:382px;top:752px;width:13px;height:13px;border:1px solid #777;border-radius:2px;box-sizing:border-box;background:#fff"></div>
<div style="position:absolute;left:409.5px;top:750.56px;font-size:12.9px;line-height:16px;color:#555;font-weight:normal;white-space:nowrap;">26-09-2020</div>
<div style="position:absolute;left:518px;top:746px;width:150px;height:26px;background:#000"></div>
<div style="position:absolute;left:673px;top:750.62px;font-size:12.7px;line-height:16px;color:#555;font-weight:normal;white-space:nowrap;">Declaratie</div>
<div style="position:absolute;left:663px;width:400px;text-align:right;top:750.59px;font-size:12.8px;line-height:16px;color:#555;font-weight:normal;white-space:nowrap;">2020-09137</div>
<div style="position:absolute;left:1223px;top:750.56px;font-size:12.9px;line-height:16px;color:#555;font-weight:normal;white-space:nowrap;">01-09-2020</div>
<div style="position:absolute;left:1000px;width:400px;text-align:right;top:750.69px;font-size:12.5px;line-height:16px;color:#555;font-weight:normal;white-space:nowrap;">45,00</div>
<div style="position:absolute;left:1410px;top:747px;width:228px;height:26px;background:#000"></div>
<div style="position:absolute;left:1711px;top:746px;width:150px;height:26px;background:#000"></div>
<div style="position:absolute;left:349px;top:785px;width:1535px;height:53px;background:#f8f8f8;border-top:1px solid #edf3fb;border-bottom:1px solid #edf3fb;box-sizing:border-box"></div>
<div style="position:absolute;left:371.3px;top:786px;width:1px;height:51px;background:#ffffff"></div>
<div style="position:absolute;left:404.4px;top:786px;width:1px;height:51px;background:#ffffff"></div>
<div style="position:absolute;left:515.5px;top:786px;width:1px;height:51px;background:#ffffff"></div>
<div style="position:absolute;left:668.4px;top:786px;width:1px;height:51px;background:#ffffff"></div>
<div style="position:absolute;left:974.5px;top:786px;width:1px;height:51px;background:#ffffff"></div>
<div style="position:absolute;left:1067.3px;top:786px;width:1px;height:51px;background:#ffffff"></div>
<div style="position:absolute;left:1218.6px;top:786px;width:1px;height:51px;background:#ffffff"></div>
<div style="position:absolute;left:1404.3px;top:786px;width:1px;height:51px;background:#ffffff"></div>
<div style="position:absolute;left:1706.3px;top:786px;width:1px;height:51px;background:#ffffff"></div>
<svg style="position:absolute;left:355px;top:806px;overflow:visible" width="12" height="14" viewBox="0 0 12 14"><path d="M2.9 1.6 L9 6.6 L2.9 11.6 L4.6 6.6 Z" fill="#222" stroke="#222" stroke-width="0.6" stroke-linejoin="round"/></svg>
<div style="position:absolute;left:382px;top:805px;width:13px;height:13px;border:1px solid #777;border-radius:2px;box-sizing:border-box;background:#fff"></div>
<div style="position:absolute;left:409.5px;top:803.43px;font-size:12.9px;line-height:16px;color:#555;font-weight:normal;white-space:nowrap;">26-09-2020</div>
<div style="position:absolute;left:518px;top:796px;width:150px;height:26px;background:#000"></div>
<div style="position:absolute;left:673px;top:803.50px;font-size:12.7px;line-height:16px;color:#555;font-weight:normal;white-space:nowrap;">Declaratie</div>
<div style="position:absolute;left:663px;width:400px;text-align:right;top:803.46px;font-size:12.8px;line-height:16px;color:#555;font-weight:normal;white-space:nowrap;">2020-09140</div>
<div style="position:absolute;left:1223px;top:803.43px;font-size:12.9px;line-height:16px;color:#555;font-weight:normal;white-space:nowrap;">01-09-2020</div>
<div style="position:absolute;left:1000px;width:400px;text-align:right;top:803.57px;font-size:12.5px;line-height:16px;color:#555;font-weight:normal;white-space:nowrap;">45,50</div>
<div style="position:absolute;left:1410px;top:796px;width:228px;height:26px;background:#000"></div>
<div style="position:absolute;left:1711px;top:796px;width:150px;height:26px;background:#000"></div>
</body></html>
